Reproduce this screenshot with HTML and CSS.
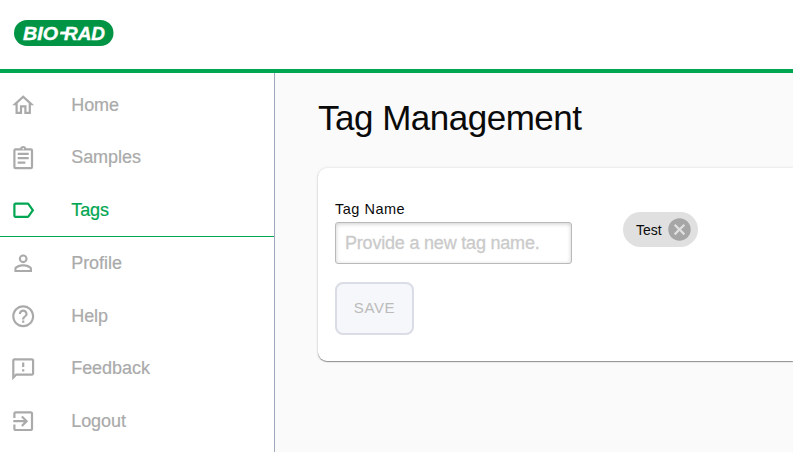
FILE: index.html
```html
<!DOCTYPE html>
<html lang="en">
<head>
<meta charset="utf-8">
<title>Tag Management</title>
<link rel="stylesheet" href="styles.css">
</head>
<body>
<header class="header">
  <svg class="logo" viewBox="0 0 100 26" role="img" aria-label="Bio-Rad">
    <rect width="99.5" height="26" rx="13"/>
    <text x="9" y="20" textLength="35" lengthAdjust="spacingAndGlyphs">BIO</text>
    <path d="M46.500 11.500h8v3h-8.500z"/>
    <text x="50" y="20" textLength="41" lengthAdjust="spacingAndGlyphs">RAD</text>
  </svg>
</header>
<div class="shell">
  <nav class="nav">
    <a class="item"><svg viewBox="0 0 24 24"><path d="M12 5.690l5 4.500V18h-2v-6H9v6H7v-7.810l5-4.500M12 3L2 12h3v8h6v-6h2v6h6v-8h3L12 3z"/></svg><span>Home</span></a>
    <a class="item"><svg viewBox="0 0 24 24"><path d="M7 15h7v2H7zm0-4h10v2H7zm0-4h10v2H7zm12-4h-4.180C14.400 1.840 13.300 1 12 1s-2.400.84-2.820 2H5a2 2 0 0 0-2 2v15a2 2 0 0 0 2 2h14a2 2 0 0 0 2-2V5a2 2 0 0 0-2-2zm-7-.25a.75.75 0 1 1 0 1.500.75.75 0 0 1 0-1.500zM19 20H5V5h14z"/></svg><span>Samples</span></a>
    <a class="item active"><svg viewBox="0 0 24 24"><path d="M17.630 5.840C17.270 5.330 16.670 5 16 5L5 5.010C3.900 5.010 3 5.900 3 7v10c0 1.100.9 1.990 2 1.990L16 19c.67 0 1.270-.33 1.630-.84L22 12l-4.370-6.160zM16 17H5V7h11l3.550 5L16 17z"/></svg><span>Tags</span></a>
    <a class="item"><svg viewBox="0 0 24 24"><path d="M12 5.900a2.100 2.100 0 1 1 0 4.200 2.100 2.100 0 0 1 0-4.200m0 9c2.970 0 6.100 1.460 6.100 2.100v1.100H5.900V17c0-.64 3.130-2.100 6.100-2.100M12 4C9.790 4 8 5.790 8 8s1.790 4 4 4 4-1.790 4-4-1.790-4-4-4zm0 9c-2.670 0-8 1.340-8 4v3h16v-3c0-2.660-5.330-4-8-4z"/></svg><span>Profile</span></a>
    <a class="item"><svg viewBox="0 0 24 24"><path d="M11 18h2v-2h-2v2zm1-16C6.480 2 2 6.480 2 12s4.480 10 10 10 10-4.480 10-10S17.520 2 12 2zm0 18c-4.410 0-8-3.590-8-8s3.590-8 8-8 8 3.590 8 8-3.590 8-8 8zm0-14c-2.210 0-4 1.790-4 4h2c0-1.100.9-2 2-2s2 .9 2 2c0 2-3 1.750-3 5h2c0-2.250 3-2.500 3-5 0-2.210-1.790-4-4-4z"/></svg><span>Help</span></a>
    <a class="item"><svg viewBox="0 0 24 24"><path d="M20 2H4c-1.100 0-1.990.9-1.990 2L2 22l4-4h14c1.100 0 2-.9 2-2V4c0-1.100-.9-2-2-2zm0 14H5.170L4 17.170V4h16v12zm-9-4h2v2h-2zm0-6h2v4h-2z"/></svg><span>Feedback</span></a>
    <a class="item"><svg viewBox="0 0 24 24"><path d="M10.090 15.590L11.500 17l5-5-5-5-1.410 1.410L12.670 11H3v2h9.670l-2.580 2.590zM19 3H5c-1.110 0-2 .9-2 2v4h2V5h14v14H5v-4H3v4c0 1.100.89 2 2 2h14c1.100 0 2-.9 2-2V5c0-1.100-.9-2-2-2z"/></svg><span>Logout</span></a>
  </nav>
  <main class="main">
    <h1 class="title">Tag Management</h1>
    <section class="card">
      <form class="form">
        <label class="label" for="tag">Tag Name</label>
        <input class="input" id="tag" type="text" placeholder="Provide a new tag name.">
        <button class="save" type="button" disabled>SAVE</button>
      </form>
      <div class="chip"><span>Test</span><svg viewBox="0 0 24 24"><path d="M12 2C6.470 2 2 6.470 2 12s4.470 10 10 10 10-4.470 10-10S17.530 2 12 2zm5 13.590L15.590 17 12 13.410 8.410 17 7 15.590 10.590 12 7 8.410 8.410 7 12 10.590 15.590 7 17 8.410 13.410 12 17 15.590z"/></svg></div>
    </section>
  </main>
</div>
</body>
</html>
```

FILE: styles.css
```css
* { box-sizing: border-box; }
body {
  margin: 0;
  height: 452px;
  overflow: hidden;
  display: flex;
  flex-direction: column;
  font-family: "Liberation Sans", Arial, sans-serif;
  color: #0a0a0a;
  background: #fff;
}
.header {
  flex: none;
  height: 73px;
  padding: 20px 14px 0;
  border-bottom: 4px solid #00a651;
}
.logo { display: block; width: 100px; height: 26px; }
.logo rect { fill: #009444; }
.logo text { font-size: 19px; font-weight: bold; font-style: italic; fill: #fff; stroke: #fff; stroke-width: 0.4px; }
.logo path { fill: #fff; }
.shell { flex: 1; display: flex; min-height: 0; }
.nav {
  flex: none;
  width: 275px;
  padding-top: 5.8px;
  border-right: 1px solid #a0a8bb;
}
.item {
  display: flex;
  align-items: center;
  gap: 35px;
  height: 52.75px;
  padding-left: 9.8px;
  font-size: 18px;
  color: #aaa;
}
.item svg { width: 26.4px; height: 26.4px; fill: currentColor; }
.item span { -webkit-text-stroke: 0.2px currentColor; letter-spacing: -0.05px; }
.active { color: #00a651; border-bottom: 1px solid #00a651; }
.main { flex: 1; min-width: 0; padding: 25px 0 0 43px; background: #fafafa; }
.title { margin: 0; font-size: 35px; line-height: 40px; font-weight: normal; letter-spacing: -0.5px; white-space: nowrap; }
.card {
  display: flex;
  align-items: flex-start;
  gap: 51px;
  height: 193px;
  margin-top: 30px;
  padding: 32px 17px 0;
  background: #fff;
  border-radius: 9px 0 0 9px;
  box-shadow: 0 1px 1px rgba(0,0,0,.4), 0 0 3px rgba(0,0,0,.14);
}
.form { display: flex; flex-direction: column; align-items: flex-start; width: 237px; }
.label { font-size: 14.5px; line-height: 18px; letter-spacing: 0.5px; }
.input {
  width: 237px;
  height: 42px;
  margin-top: 4px;
  padding: 0 9px;
  border: 1px solid #b9b9b9;
  border-radius: 3px;
  box-shadow: inset 0 1px 4px rgba(0,0,0,.2);
  font: 18px "Liberation Sans", Arial, sans-serif;
  letter-spacing: -0.2px;
}
.input::placeholder { color: #cacaca; opacity: 1; -webkit-text-stroke: 0.3px #cacaca; }
.save {
  width: 79px;
  height: 53px;
  margin-top: 18px;
  padding: 0 0 2px;
  border: 2px solid #dadce6;
  border-radius: 8px;
  background: #f6f7fa;
  color: #bbb;
  font: 15px "Liberation Sans", Arial, sans-serif;
  letter-spacing: 0.6px;
}
.chip {
  display: flex;
  align-items: center;
  justify-content: space-between;
  width: 75px;
  height: 35px;
  margin-top: 12px;
  padding: 0 5px 0 13px;
  border-radius: 18px;
  background: #e0e0e0;
  font-size: 14px;
}
.chip svg { width: 27px; height: 27px; fill: #a6a6a6; }
```
